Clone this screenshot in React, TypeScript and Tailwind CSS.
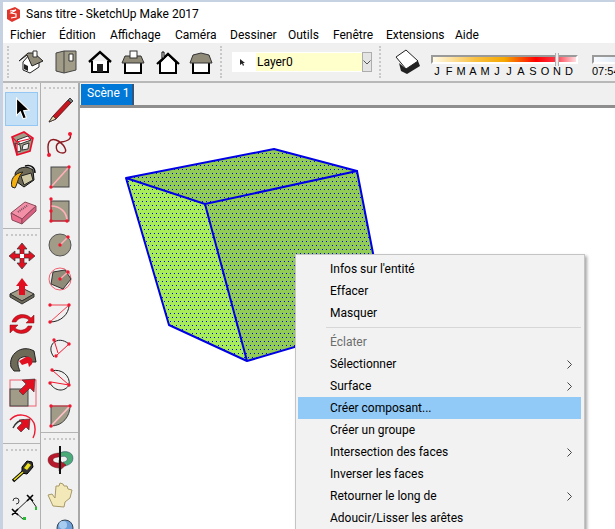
import React from "react";

const Grip = () => (
  <div className="h-[2px] mx-[3px] border-t-2 border-dotted border-[#c8c8c8]" />
);

const S = ({ children }: { children: React.ReactNode }) => (
  <svg width="30" height="30" viewBox="0 0 30 30">{children}</svg>
);

const Home1 = () => (
  <svg width="26" height="24" viewBox="0 0 26 24">
    <path d="M5 12 L5 20 L12 23 L21 17 L21 11 L12 4 Z" fill="#fff" stroke="#222" />
    <path d="M1 11 L10 3 L16 3 L25 11 L14 16 L9 5 Z" fill="#8f8b78" stroke="#222" />
    <path d="M15 1 h4 v6 h-4 z" fill="#fff" stroke="#333" />
    <path d="M6 14 l4 2 v5 l-4 -2 z" fill="#222" />
  </svg>
);
const Home2 = () => (
  <svg width="22" height="24" viewBox="0 0 22 24">
    <path d="M1 3 L9 1 L21 1 L21 20 L9 23 L1 21 Z" fill="#a09c88" stroke="#444" />
    <path d="M9 1 V23" stroke="#444" />
    <path d="M14 4 h4 v7 h-4 z" fill="#fff" stroke="#333" />
  </svg>
);
const Home3 = () => (
  <svg width="24" height="24" viewBox="0 0 24 24">
    <path d="M1 12 L12 2 L23 12" fill="none" stroke="#000" strokeWidth="2.4" />
    <path d="M4 11 V22 H20 V11" fill="#fff" stroke="#000" strokeWidth="2" />
    <rect x="9" y="14" width="6" height="8" fill="#222" />
  </svg>
);
const Home4 = () => (
  <svg width="24" height="24" viewBox="0 0 24 24">
    <path d="M4 12 V23 H20 V12" fill="#fff" stroke="#000" strokeWidth="2" />
    <path d="M1 13 L4 6 H20 L23 13 Z" fill="#8f8b78" stroke="#333" />
    <rect x="9" y="1" width="7" height="7" fill="#fff" stroke="#333" />
  </svg>
);
const Home5 = () => (
  <svg width="24" height="24" viewBox="0 0 24 24">
    <path d="M4 12 V23 H20 V12 L12 4 Z" fill="#fff" stroke="#000" strokeWidth="2" />
    <path d="M1 14 L12 4 L23 14" fill="none" stroke="#000" strokeWidth="2.2" />
    <path d="M6 2 h2 v6 h-2 z" fill="#fff" stroke="#000" />
  </svg>
);
const Home6 = () => (
  <svg width="24" height="24" viewBox="0 0 24 24">
    <path d="M4 12 V23 H20 V12" fill="#fff" stroke="#000" strokeWidth="2" />
    <path d="M1 13 L4 5 L12 3 L20 5 L23 13 Z" fill="#8f8b78" stroke="#333" />
  </svg>
);

const Select = () => (
  <svg width="18" height="24" viewBox="0 0 16 22">
    <path d="M3 1 V17 L6.5 13.5 L9 20 L12 19 L9.5 12.5 L14.5 12 Z" fill="#000" stroke="#fff" />
  </svg>
);
const CubeSelect = () => (
  <S>
    <path d="M5 9 L17 4 L26 10 L23 23 L10 27 Z" fill="#a09c88" stroke="#e8102c" strokeWidth="1.6" />
    <path d="M10 12 L21 8 L24 12 L13 16 Z" fill="#fff" stroke="#333" />
    <path d="M8 15 l5 2 l1 6 l-4 1 z M16 17 l6 -2 l-1 6 l-6 1z" fill="#eee" stroke="#333" />
    <path d="M5 9 L10 14 L10 27 M10 14 L26 10" fill="none" stroke="#e8102c" strokeWidth="1.2" />
  </S>
);
const Bucket = () => (
  <S>
    <path d="M8 12 C10 5 20 3 26 8 L27 18 L17 25 L10 20 Z" fill="#6e6a58" stroke="#111" />
    <path d="M14 14 L24 11 L26 18 L17 23 Z" fill="#cfc8a4" stroke="#222" />
    <path d="M5 25 C3 18 7 11 16 10 C11 14 11 21 8 26 Z" fill="#f4b010" stroke="#222" />
    <path d="M18 4 C24 2 28 6 28 11" fill="none" stroke="#111" strokeWidth="1.5" />
  </S>
);
const Eraser = () => (
  <S>
    <path d="M4 17 L18 6 L29 10 L15 23 Z" fill="#f48fa8" stroke="#8a4a58" />
    <path d="M4 17 L15 23 L15 28 L5 24 Z" fill="#ec6f90" stroke="#8a4a58" />
    <path d="M15 23 L29 10 L29 15 L15 28 Z" fill="#d85f80" stroke="#8a4a58" />
    <path d="M11 16 L21 9" stroke="#7a5060" strokeWidth="2" strokeDasharray="1 1" />
  </S>
);
const Pencil = () => (
  <S>
    <path d="M8 22 L23 6 L26 9 L11 25 L4 28 Z" fill="#c8161f" stroke="#4c1014" strokeWidth="0.8" />
    <path d="M23 6 L25 4 L28 7 L26 9 Z" fill="#777" stroke="#222" strokeWidth="0.8" />
    <path d="M8 22 L11 25 L4 28 Z" fill="#e8d8a8" stroke="#333" strokeWidth="0.8" />
  </S>
);
const Freehand = () => (
  <S>
    <path d="M4 27 C1 14 5 10 11 12 C19 15 24 25 18 25 C10 25 9 16 16 14 C23 13 27 11 25 6" fill="none" stroke="#8c1820" strokeWidth="1.4" />
    <circle cx="4" cy="27" r="2" fill="#f01830" />
    <circle cx="25" cy="6" r="2" fill="#f01830" />
  </S>
);
const Dot = ({ x, y, r = 1.7 }: { x: number; y: number; r?: number }) => (
  <circle cx={x} cy={y} r={r} fill="#f01830" />
);
const Rect = () => (
  <S>
    <rect x="6" y="5" width="18" height="20" fill="#a09c88" stroke="#444" />
    <path d="M6 25 L24 5" stroke="#ffb0b8" strokeWidth="1.6" />
    <Dot x={6} y={25} />
    <Dot x={24} y={5} />
  </S>
);
const RoundRect = () => (
  <S>
    <rect x="6" y="5" width="18" height="20" fill="#a09c88" stroke="#444" />
    <path d="M6 10 C15 10 22 16 22 25" fill="none" stroke="#ffb0b8" strokeWidth="1.6" />
    <path d="M6 3 V25 H22" fill="none" stroke="#f01830" />
    <Dot x={6} y={3} />
    <Dot x={6} y={15} />
    <Dot x={6} y={25} />
    <Dot x={22} y={25} />
  </S>
);
const Circle = () => (
  <S>
    <circle cx="15" cy="15" r="11" fill="#a09c88" stroke="#555" />
    <path d="M15 15 L23 7" stroke="#ffb0b8" strokeWidth="1.4" />
    <Dot x={15} y={15} />
    <Dot x={23} y={7} />
  </S>
);
const Polygon = () => (
  <S>
    <circle cx="15" cy="15" r="11" fill="none" stroke="#f06070" />
    <path d="M8 8 L20 6 L26 15 L18 25 L6 20 Z" fill="#8f8b78" stroke="#333" />
    <path d="M15 15 L23 8" stroke="#ffb0b8" strokeWidth="1.4" />
    <Dot x={15} y={15} />
    <Dot x={23} y={8} />
  </S>
);
const Arc1 = () => (
  <S>
    <path d="M24 7 C24 16 16 24 5 24" fill="none" stroke="#222" />
    <path d="M5 7 H24 L5 24" fill="none" stroke="#f04050" />
    <Dot x={5} y={7} />
    <Dot x={24} y={7} />
    <Dot x={5} y={24} />
  </S>
);
const Arc2 = () => (
  <S>
    <path d="M9 25 C0 14 12 2 24 12" fill="none" stroke="#222" />
    <path d="M9 8 L13 21 M24 12 L11 24" fill="none" stroke="#f01830" />
    <Dot x={9} y={8} />
    <Dot x={24} y={12} />
    <Dot x={11} y={24} />
  </S>
);
const Arc3 = () => (
  <S>
    <path d="M7 5 C16 2 26 10 24 19 C20 26 10 26 5 17" fill="none" stroke="#222" />
    <path d="M7 4 L24 19 L6 16" fill="none" stroke="#f01830" />
    <Dot x={7} y={4} />
    <Dot x={24} y={19} />
    <Dot x={5} y={17} />
  </S>
);
const Pie = () => (
  <S>
    <path d="M6 26 L6 6 H25 C25 16 18 26 6 26 Z" fill="#a09c88" stroke="#444" />
    <path d="M6 26 L25 6" stroke="#ffc0c8" strokeWidth="1.8" />
    <path d="M6 6 H25" stroke="#f04050" />
    <Dot x={6} y={6} />
    <Dot x={25} y={6} />
    <Dot x={6} y={26} />
  </S>
);
const Move = () => (
  <S>
    <path d="M15 2 L20 8 H17 V13 H22 V10 L28 15 L22 20 V17 H17 V22 H20 L15 28 L10 22 H13 V17 H8 V20 L2 15 L8 10 V13 H13 V8 H10 Z" fill="#e01020" stroke="#333" strokeWidth="0.7" />
    <rect x="13" y="13" width="4" height="4" fill="#fff" />
  </S>
);
const Push = () => (
  <S>
    <path d="M3 19 L15 13 L27 19 L15 26 Z" fill="#a09c88" stroke="#333" />
    <path d="M3 19 V22 L15 29 L27 22 V19 L15 26 Z" fill="#6e6a58" stroke="#333" />
    <path d="M15 3 L21 11 H18 V20 H12 V11 H9 Z" fill="#e01020" />
  </S>
);
const Rotate = () => (
  <S>
    <path d="M5 13 C7 5 18 3 24 9 L27 6 V14 H19 L22 11 C17 7 11 9 9 13 Z" fill="#e01020" stroke="#7a1014" strokeWidth="0.5" />
    <path d="M25 17 C23 25 12 27 6 21 L3 24 V16 H11 L8 19 C13 23 19 21 21 17 Z" fill="#e01020" stroke="#7a1014" strokeWidth="0.5" />
  </S>
);
const FollowMe = () => (
  <S>
    <path d="M4 24 C1 11 15 1 27 8 L29 19 L24 19 C24 13 17 12 12 16 C10 19 11 24 13 28 L7 28 Z" fill="#6e6a58" stroke="#222" />
    <path d="M12 18 L19 14 C23 13 27 16 25 21 L22 24 L21 20 L15 22 Z" fill="#e01020" />
  </S>
);
const Scale = () => (
  <S>
    <rect x="3" y="3" width="26" height="26" fill="none" stroke="#f06070" />
    <rect x="3" y="12" width="18" height="17" fill="#a09c88" stroke="#444" />
    <path d="M28 2 L27 15 L23 11 L16 18 L12 14 L19 7 L15 3 Z" fill="#e01020" stroke="#333" strokeWidth="0.6" />
  </S>
);
const Offset = () => (
  <S>
    <path d="M3 9 C9 2 22 2 27 12 C29 18 28 23 26 27" fill="none" stroke="#f01830" strokeWidth="1.4" />
    <path d="M6 17 C9 11 14 9 17 9" fill="none" stroke="#333" strokeWidth="1.4" />
    <path d="M23 8 L22 19 L19 16 L14 21 L10 17 L15 12 L12 9 Z" fill="#e01020" stroke="#333" strokeWidth="0.6" />
  </S>
);
const Tape = () => (
  <S>
    <path d="M15 11 L20 5 L25 6 L26 11 L20 18 L15 17 Z" fill="#333" stroke="#000" />
    <path d="M17 12 L21 7 L24 9 L20 14 Z" fill="#ede020" />
    <path d="M6 25 L16 16" stroke="#000" strokeWidth="3.4" />
    <path d="M7 24 L16 16" stroke="#ede020" strokeWidth="1.6" />
  </S>
);
const Axes = () => (
  <S>
    <path d="M8 22 L23 8 M8 22 L17 30 M23 8 L30 18" stroke="#222" fill="none" />
    <path d="M5 19 L11 25 M5 25 L11 19 M20 5 L26 11 M20 11 L26 5" stroke="#000" strokeWidth="1.6" />
    <rect x="16" y="27" width="3" height="3" fill="#22c030" />
    <rect x="28" y="17" width="3" height="3" fill="#22c030" />
    <path d="M6 11 a3 3 0 1 1 3 3" fill="none" stroke="#333" />
  </S>
);
const Orbit = () => (
  <S>
    <path d="M15 8 C20 5 28 7 28 13 C28 18 24 20 20 21 L18 17 C21 17 23 15 22 13 C21 11 18 11 15 12 Z" fill="#4aaa78" stroke="#225" strokeWidth="0.4" />
    <path d="M15 8 C9 8 3 10 3 15 C3 20 9 23 14 23 L14 26 L21 20 L14 15 L14 18 C11 18 8 17 8 15 C8 13 11 12 15 12 Z" fill="#b8182c" stroke="#511" strokeWidth="0.4" />
    <path d="M15 1 V29" stroke="#111" strokeWidth="2" />
  </S>
);
const Hand = () => (
  <S>
    <path d="M8 27 L3 16 L7 15 L10 19 L11 7 L14 7 L15 4 L18 5 L19 7 L22 7 L23 10 L27 11 L25 19 L20 23 L19 28 Z" fill="#f2e8b8" stroke="#a89868" />
  </S>
);
const Zoom = () => (
  <S>
    <circle cx="20" cy="15" r="8" fill="#6e9fd8" stroke="#345" />
    <circle cx="18" cy="12" r="4" fill="#a8ccf0" />
  </S>
);

const col1: React.ReactNode[][] = [
  [<Select key="a" />, <CubeSelect key="b" />, <Bucket key="c" />, <Eraser key="d" />],
  [<Move key="a" />, <Push key="b" />, <Rotate key="c" />, <FollowMe key="d" />, <Scale key="e" />, <Offset key="f" />],
  [<Tape key="a" />, <Axes key="b" />],
];
const col2: React.ReactNode[][] = [
  [
    <Pencil key="a" />,
    <Freehand key="b" />,
    <Rect key="c" />,
    <RoundRect key="d" />,
    <Circle key="e" />,
    <Polygon key="f" />,
    <Arc1 key="g" />,
    <Arc2 key="h" />,
    <Arc3 key="i" />,
    <Pie key="j" />,
  ],
  [<Orbit key="a" />, <Hand key="b" />, <Zoom key="c" />],
];

const Column = ({ groups, active, cls }: { groups: React.ReactNode[][]; active?: boolean; cls: string }) => (
  <div className={`flex flex-col shrink-0 ${cls}`}>
    {groups.map((g, i) => (
      <div key={i} className={`flex flex-col shrink-0 ${i < groups.length - 1 ? "border-b border-[#b4b4b4] mb-[1px]" : ""}`}>
        <div className="h-[9px] pt-[4px]">
          <Grip />
        </div>
        {g.map((icon, j) => (
          <div
            key={j}
            className={`h-[34px] flex items-center justify-center ${
              active && i === 0 && j === 0 ? "bg-[#c4e0f6] border border-[#93c8f4] mx-[2px]" : ""
            }`}
          >
            {icon}
          </div>
        ))}
      </div>
    ))}
  </div>
);

const menu: [string, number][] = [
  ["Fichier", 49],
  ["Édition", 51],
  ["Affichage", 65],
  ["Caméra", 55],
  ["Dessiner", 58],
  ["Outils", 45],
  ["Fenêtre", 53],
  ["Extensions", 69],
  ["Aide", 40],
];

const months = ["J", "F", "M", "A", "M", "J", "J", "A", "S", "O", "N", "D"];

type Item = { t: string; arrow?: boolean; hi?: boolean; off?: boolean; sep?: boolean };
const items: Item[] = [
  { t: "Infos sur l'entité" },
  { t: "Effacer" },
  { t: "Masquer" },
  { t: "", sep: true },
  { t: "Éclater", off: true },
  { t: "Sélectionner", arrow: true },
  { t: "Surface", arrow: true },
  { t: "Créer composant...", hi: true },
  { t: "Créer un groupe" },
  { t: "Intersection des faces", arrow: true },
  { t: "Inverser les faces" },
  { t: "Retourner le long de", arrow: true },
  { t: "Adoucir/Lisser les arêtes" },
];

const Cube = () => (
  <svg width="535" height="421" viewBox="80 108 535 421" className="block">
    <defs>
      <pattern id="dots" width="4" height="8" patternUnits="userSpaceOnUse" x="2" y="1">
        <rect x="0" y="0" width="1" height="1" fill="#0000ff" />
        <rect x="2" y="4" width="1" height="1" fill="#0000ff" />
      </pattern>
    </defs>
    <path d="M126 178 L205 204 L247 361 L169 325 Z" fill="#a8ec58" />
    <path d="M205 204 L357 171 L386 320 L247 361 Z" fill="#92cc54" />
    <path d="M126 178 L274 149 L357 171 L205 204 Z" fill="#92cc54" />
    <path d="M126 178 L205 204 L247 361 L169 325 Z M205 204 L357 171 L386 320 L247 361 Z M126 178 L274 149 L357 171 L205 204 Z" fill="url(#dots)" />
    <path
      d="M126 178 L274 149 L357 171 L205 204 Z M126 178 L169 325 L247 361 L205 204 M247 361 L386 320 L357 171"
      fill="none"
      stroke="#0000e6"
      strokeWidth="2"
      strokeLinejoin="round"
    />
  </svg>
);

export default function App() {
  return (
    <div
      className="w-[615px] h-[529px] overflow-hidden flex flex-col bg-[#f0f0f0] text-[12px] text-black border-t-2 border-[#c6d2e2]"
      style={{ fontFamily: 'Roboto, "Liberation Sans", sans-serif' }}
    >
      <div className="flex flex-1 min-h-0 border-l-[3px] border-[#c6d2e2]">
        <div className="flex-1 min-w-0 flex flex-col">
          {/* title */}
          <div className="h-[24px] bg-white flex items-center pl-[3px] gap-[6px] shrink-0">
            <svg width="14" height="15" viewBox="0 0 14 15">
              <path d="M1 3 L9 0 L14 3 V11 L6 15 L1 12 Z" fill="#e0362c" />
              <path d="M4 4 L10 3 L5 6 L10 7 L10 10 L5 11" fill="none" stroke="#fff" strokeWidth="1.2" />
            </svg>
            <span className="whitespace-nowrap">Sans titre - SketchUp Make 2017</span>
          </div>
          {/* menu */}
          <div className="h-[17px] bg-white flex items-center pl-[7px] shrink-0">
            {menu.map(([m, w]) => (
              <span key={m} className="whitespace-nowrap" style={{ width: w }}>
                {m}
              </span>
            ))}
          </div>
          {/* toolbar */}
          <div className="h-[40px] shrink-0 flex items-center border-b-2 border-[#b8b8b8] overflow-hidden">
            <div className="w-[2px] h-[32px] ml-[4px] border-l-2 border-dotted border-[#c8c8c8]" />
            <div className="ml-[6px] flex items-center">
              <div className="w-[32px] flex justify-center"><Home1 /></div>
              <div className="w-[38px] flex justify-center"><Home2 /></div>
              <div className="w-[30px] flex justify-center"><Home3 /></div>
              <div className="w-[36px] flex justify-center"><Home4 /></div>
              <div className="w-[33px] flex justify-center"><Home5 /></div>
              <div className="w-[34px] flex justify-center"><Home6 /></div>
            </div>
            <div className="ml-[1px] w-[1px] h-[36px] bg-[#bdbdbd]" />
            <div className="w-[2px] h-[32px] ml-[1px] border-l-2 border-dotted border-[#c8c8c8]" />
            <div className="ml-[10px] h-[20px] w-[130px] bg-white flex items-center">
              <svg width="24" height="20" viewBox="0 0 24 20">
                <path d="M8 7 V13 L10 11.5 L11 14 L12 13 L11 11 L13 11 Z" fill="#222" />
              </svg>
              <div className="w-[106px] h-[18px] bg-[#ffffcc] leading-[18px] pl-[1px]">Layer0</div>
            </div>
            <div className="w-[14px] h-[20px] bg-[#e4e4e4] border border-[#adadad] flex items-center justify-center">
              <svg width="8" height="5" viewBox="0 0 8 5">
                <path d="M0.5 0.5 L4 4 L7.5 0.5" fill="none" stroke="#555" />
              </svg>
            </div>
            <div className="ml-[6px] w-[1px] h-[36px] bg-[#bdbdbd]" />
            <div className="w-[2px] h-[32px] ml-[1px] border-l-2 border-dotted border-[#c8c8c8]" />
            <div className="ml-[14px] w-[26px] shrink-0">
              <svg width="26" height="26" viewBox="0 0 26 26" className="block">
                <path d="M1 8 L11 1 L23 12 L11 20 Z" fill="#fff" stroke="#222" />
                <path d="M4 14 L11 20 L23 12 L25 17 L12 25 L6 22 Z" fill="#222" />
              </svg>
            </div>
            <div className="ml-[10px] mt-[8px] w-[147px] shrink-0 flex flex-col">
              <div className="relative h-[9px] border-2 border-t-[#9a9a9a] border-l-[#9a9a9a] border-r-white border-b-white bg-[linear-gradient(to_right,#fffbe8_0%,#f9c040_30%,#f5a800_50%,#ff0000_72%,#ff3040_85%,#ffdde0_100%)]">
                <div className="absolute left-[122px] top-[-4px] w-[4px] h-[13px] bg-[#ececec] border-x border-[#b0b0b0]" />
              </div>
              <div
                className="flex h-[13px] leading-[14px] text-[11px]"
                style={{ fontFamily: '"Liberation Sans", sans-serif' }}
              >
                {months.map((m, i) => (
                  <span key={i} className="w-[12px] text-center shrink-0">
                    {m}
                  </span>
                ))}
              </div>
            </div>
            <div className="ml-[14px] mt-[8px] w-[50px] shrink-0 flex flex-col">
              <div className="h-[9px] border-2 border-t-[#9a9a9a] border-l-[#9a9a9a] border-r-white border-b-white bg-[linear-gradient(to_right,#f8fbff,#c8d8e8)]" />
              <div
                className="h-[13px] leading-[14px] text-[11px]"
                style={{ fontFamily: '"Liberation Sans", sans-serif' }}
              >
                07:54
              </div>
            </div>
          </div>
          {/* body */}
          <div className="flex flex-1 min-h-0">
            <Column groups={col1} active cls="w-[38px] border-r border-[#b0b0b0]" />
            <Column groups={col2} cls="w-[39px] border-r-2 border-[#a8a8a8]" />
            <div className="flex-1 min-w-0 flex flex-col relative">
              <div className="h-[25px] shrink-0 pl-[1px] pt-[1px] border-b-[3px] border-[#8e8e8e]">
                <div className="relative h-[21px] w-[53px] bg-[#0078d7] text-white pl-[6px] leading-[19px] border-r-2 border-[#33557a]">
                  Scène 1
                </div>
              </div>
              <div className="flex-1 min-h-0 bg-white overflow-hidden">
                <Cube />
              </div>
              {/* context menu */}
              <div className="absolute left-[215px] top-[171px] w-[290px] bg-[#f2f2f2] border border-[#c4c4c4] pt-[3px] pl-[2px] pr-[3px] shadow-[2px_2px_3px_rgba(0,0,0,0.35)]">
                {items.map((it, i) =>
                  it.sep ? (
                    <div key={i} className="h-[7px] pl-[28px] pt-[3px]">
                      <div className="h-[1px] bg-[#d7d7d7]" />
                    </div>
                  ) : (
                    <div
                      key={i}
                      className={`h-[22px] pl-[32px] pr-[9px] flex items-center justify-between whitespace-nowrap ${
                        it.hi ? "bg-[#91c9f7]" : ""
                      } ${it.off ? "text-[#6d6d6d]" : ""}`}
                    >
                      <span>{it.t}</span>
                      {it.arrow && (
                        <svg width="5" height="9" viewBox="0 0 5 9">
                          <path d="M0.5 0.5 L4.5 4.5 L0.5 8.5" fill="none" stroke="#444" />
                        </svg>
                      )}
                    </div>
                  )
                )}
              </div>
            </div>
          </div>
        </div>
      </div>
    </div>
  );
}
